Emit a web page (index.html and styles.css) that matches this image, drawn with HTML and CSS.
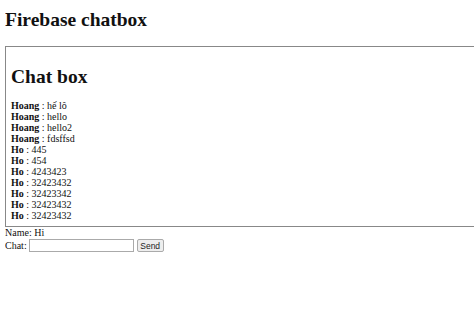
FILE: index.html
```html
<!DOCTYPE html>
<html lang="en">
<head>
    <meta charset="UTF-8">
    <title>Firebase chatbox</title>
    <link rel="stylesheet" href="styles.css">
</head>
<body>
    <h1>Firebase chatbox</h1>
    <div class="chat-box">
        <h2>Chat box</h2>
        <div id="messages" class="messages">
            <div><b>Hoang</b> : hế lô</div>
            <div><b>Hoang</b> : hello</div>
            <div><b>Hoang</b> : hello2</div>
            <div><b>Hoang</b> : fdsffsd</div>
            <div><b>Ho</b> : 445</div>
            <div><b>Ho</b> : 454</div>
            <div><b>Ho</b> : 4243423</div>
            <div><b>Ho</b> : 32423432</div>
            <div><b>Ho</b> : 32423342</div>
            <div><b>Ho</b> : 32423432</div>
            <div><b>Ho</b> : 32423432</div>
        </div>
    </div>
    <div class="name-row">Name: <span id="name">Hi</span></div>
    <div class="chat-row">
        <label for="chat">Chat:</label>
        <input type="text" id="chat">
        <button class="send-button">Send</button>
    </div>
</body>
</html>
```

FILE: styles.css
```css
body {
    margin: 8px 0 8px 5px;
    font-family: "Liberation Serif", "Times New Roman", serif;
    font-size: 10px;
    color: #111;
    background: #fff;
}
h1 {
    font-size: 19.5px;
    line-height: 24px;
    margin: 0 0 14px;
}
.chat-box {
    border: 1px solid #888;
    border-right: none;
    padding: 0 6px 5px 5px;
}
h2 {
    font-size: 19.5px;
    line-height: 24px;
    margin: 18px 0 11px;
}
.messages div {
    line-height: 11px;
}
.name-row {
    line-height: 11px;
}
.chat-row {
    display: flex;
    align-items: center;
    gap: 2px;
    margin-top: 1px;
}
.chat-row input {
    box-sizing: border-box;
    width: 105px;
    height: 13px;
    padding: 1px;
    border: 1px solid #aaa;
    font-size: 9px;
}
.send-button {
    box-sizing: border-box;
    margin-left: 1px;
    font-family: "Liberation Sans", Arial, sans-serif;
    font-size: 8.5px;
    padding: 0 2px;
    width: 27px;
    height: 13px;
    border: 1px solid #aaa;
    border-radius: 2px;
    background: #eee;
    color: #222;
}
```
